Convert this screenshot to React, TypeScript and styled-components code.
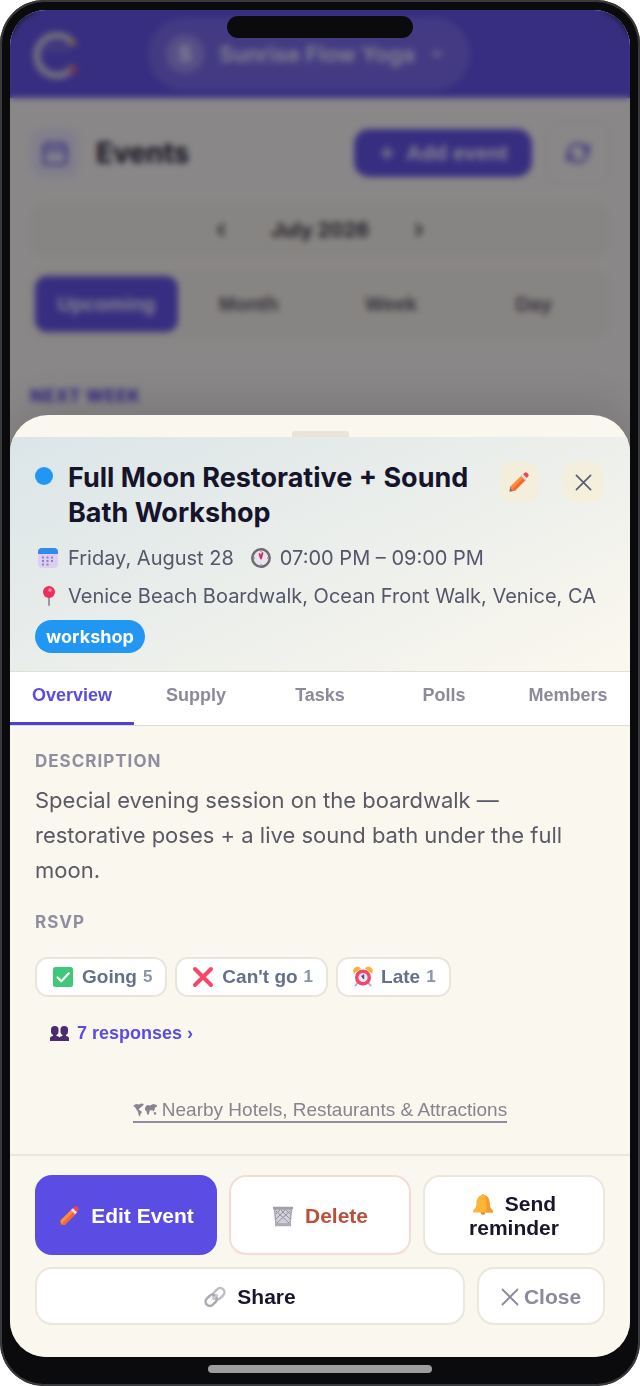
import React from "react";
import styled, { createGlobalStyle } from "styled-components";

const inter = `Inter, "Liberation Sans", sans-serif`;
const arial = `"Liberation Sans", Arial, sans-serif`;

const GlobalStyle = createGlobalStyle`
  *, *::before, *::after { box-sizing: border-box; }
  body { margin: 0; background: #fff; font-family: ${inter}; }
  button { font: inherit; color: inherit; border: 0; margin: 0; padding: 0; background: none; cursor: pointer; }
  h1, h2, h3, p { margin: 0; }
  svg { display: block; flex: none; }
`;

const Phone = styled.div`
  position: relative;
  min-height: 100vh;
  display: flex;
  flex-direction: column;
  padding: 10px 10px 0;
  border-radius: 44px;
  background: #0b0b0d;
  box-shadow: inset 0 0 0 2px #38393c;
`;

const Notch = styled.div`
  position: absolute;
  z-index: 3;
  top: 16px;
  left: 50%;
  width: 186px;
  height: 22px;
  margin-left: -93px;
  border-radius: 11px;
  background: #0b0b0d;
`;

const Screen = styled.div`
  flex: 1;
  display: grid;
  grid-template-columns: minmax(0, 1fr);
  border-radius: 36px;
  overflow: hidden;
  background: #f3f0f0;
`;

const HomeBar = styled.div`
  height: 29px;
  display: flex;
  justify-content: center;
  align-items: flex-start;
  padding-top: 8px;

  &::after {
    content: "";
    width: 224px;
    height: 8px;
    border-radius: 4px;
    background: #9d9d9f;
  }
`;

/* Page behind the sheet */

const Page = styled.div`
  grid-area: 1 / 1;
  background: #f0eded;
`;

const TopBar = styled.header`
  height: 88px;
  display: flex;
  align-items: center;
  padding: 0 21px;
  background: #5b4be0;
`;

const OrgSwitch = styled.button`
  display: flex;
  align-items: center;
  height: 72px;
  margin-left: 68px;
  padding: 0 26px 0 18px;
  gap: 15px;
  border-radius: 36px;
  background: rgba(255, 255, 255, 0.13);
  color: rgba(255, 255, 255, 0.85);
  font-weight: 600;
  font-size: 22px;
`;

const OrgInitial = styled.span`
  display: grid;
  place-items: center;
  width: 38px;
  height: 38px;
  border-radius: 50%;
  background: rgba(255, 255, 255, 0.25);
  font-size: 20px;
  font-weight: 700;
`;

const PageBody = styled.div`
  padding: 21px 20px;
`;

const TitleRow = styled.div`
  display: flex;
  align-items: center;
  height: 67px;
`;

const TitleIcon = styled.span`
  display: grid;
  place-items: center;
  width: 50px;
  height: 50px;
  margin-right: 16px;
  border-radius: 14px;
  background: #e2dff4;
  color: #7468dc;
`;

const PageTitle = styled.h1`
  flex: 1;
  font-size: 28px;
  font-weight: 700;
  color: #16142a;
`;

const AddButton = styled.button`
  display: flex;
  align-items: center;
  justify-content: center;
  gap: 10px;
  width: 178px;
  height: 48px;
  border-radius: 15px;
  background: #5b4be0;
  color: rgba(255, 255, 255, 0.9);
  font-family: ${arial};
  font-size: 21px;
  font-weight: 700;
`;

const RefreshButton = styled.button`
  display: grid;
  place-items: center;
  width: 64px;
  height: 64px;
  margin-left: 14px;
  border: 1px solid #e8e5e3;
  border-radius: 14px;
  color: #7468dc;
`;

const MonthBar = styled.div`
  display: flex;
  align-items: center;
  justify-content: center;
  gap: 40px;
  height: 56px;
  margin-top: 16px;
  border-radius: 16px;
  background: #ece9e3;
  color: #35333f;
  font-size: 20px;
  font-weight: 700;
`;

const Segments = styled.div`
  display: flex;
  height: 72px;
  margin-top: 10px;
  padding: 8px 5px;
  border-radius: 16px;
  background: #ece9e3;
`;

const Segment = styled.button<{ $on?: boolean }>`
  flex: 1;
  border-radius: 12px;
  font-family: ${arial};
  font-size: 20px;
  font-weight: 700;
  background: ${(p) => (p.$on ? "#5b4be0" : "transparent")};
  color: ${(p) => (p.$on ? "#e6e3f8" : "#5a5866")};
`;

const WeekLabel = styled.h2`
  margin-top: 46px;
  font-size: 17px;
  line-height: 20px;
  font-weight: 800;
  letter-spacing: 1px;
  color: #5b4be0;
`;

/* Sheet */

const Scrim = styled.div`
  grid-area: 1 / 1;
  z-index: 1;
  display: flex;
  flex-direction: column;
  justify-content: flex-end;
  padding-top: 40px;
  background: rgba(13, 11, 14, 0.45);
  backdrop-filter: blur(3px);
`;

const Sheet = styled.section`
  overflow: hidden;
  border-radius: 38px 38px 0 0;
  background: #faf7ee;
  box-shadow: 0 -8px 40px rgba(20, 15, 30, 0.15);
`;

const Grip = styled.div`
  height: 22px;
  padding-top: 16px;

  &::after {
    content: "";
    display: block;
    width: 57px;
    height: 6px;
    margin: 0 auto;
    border-radius: 3px 3px 0 0;
    background: #e9e4d6;
  }
`;

const SheetHeader = styled.header`
  display: flex;
  flex-direction: column;
  align-items: flex-start;
  gap: 10px;
  padding: 23px 25px 18px;
  border-bottom: 1px solid #e2dfd6;
  background: linear-gradient(155deg, #dbe5e8 0%, #faf7ee 96%);
`;

const Heading = styled.div`
  display: flex;
  align-items: flex-start;
  width: 100%;
  margin-bottom: 4px;
`;

const Dot = styled.span`
  flex: none;
  width: 18px;
  height: 18px;
  margin: 7px 15px 0 0;
  border-radius: 50%;
  background: #2196f3;
`;

const EventTitle = styled.h2`
  flex: 1;
  font-size: 27px;
  line-height: 35px;
  font-weight: 700;
  color: #15142b;
`;

const IconButton = styled.button`
  display: grid;
  place-items: center;
  flex: none;
  width: 40px;
  height: 40px;
  margin: 2px 2px 0 12px;
  border-radius: 12px;
  background: rgba(250, 238, 208, 0.55);
  color: #5c5c70;

  & + & {
    margin-left: 22px;
  }
`;

const MetaRow = styled.div`
  display: flex;
  gap: 16px;
`;

const Meta = styled.span`
  display: flex;
  align-items: center;
  gap: 8px;
  font-size: 20px;
  line-height: 28px;
  color: #55566a;
`;

const Glyph = styled.span<{ $w?: number }>`
  display: inline-flex;
  justify-content: center;
  width: ${(p) => p.$w ?? 22}px;
  flex: none;
`;

const Tag = styled.span`
  padding: 0 11px;
  border-radius: 17px;
  background: #2196f3;
  color: #fff;
  font-size: 18px;
  line-height: 33px;
  font-weight: 700;
`;

const Tabs = styled.nav`
  display: flex;
  height: 54px;
  background: #fff;
  border-bottom: 1px solid #dedbd6;
`;

const Tab = styled.button<{ $on?: boolean }>`
  flex: 1 1 0;
  padding-bottom: 3px;
  border-bottom: 3px solid ${(p) => (p.$on ? "#4f3fd6" : "transparent")};
  font-family: ${arial};
  font-size: 18px;
  font-weight: 700;
  color: ${(p) => (p.$on ? "#5b4be0" : "#8b8a9c")};
`;

const Content = styled.div`
  padding: 25px 25px 31px;
`;

const Label = styled.h3`
  font-size: 17px;
  line-height: 20px;
  font-weight: 700;
  letter-spacing: 1px;
  color: #8f8ea0;
`;

const Description = styled.p`
  margin: 12px 0 24px;
  font-size: 22px;
  line-height: 35px;
  color: #5a5a66;
`;

const Chips = styled.div`
  display: flex;
  gap: 8px;
  margin-top: 25px;
`;

const Chip = styled.button`
  display: flex;
  align-items: center;
  height: 40px;
  padding: 0 13px 0 15px;
  border: 2px solid #e9e5dc;
  border-radius: 13px;
  background: #fff;
  color: #64708a;
  font-family: ${arial};
  font-size: 19px;
  font-weight: 700;

  svg {
    margin-right: 8px;
  }
`;

const Count = styled.span`
  margin-left: 6px;
  font-size: 17px;
  color: #8a93a8;
`;

const Responses = styled.button`
  display: flex;
  align-items: center;
  gap: 8px;
  height: 24px;
  margin: 24px 0 0 15px;
  color: #5b4be0;
  font-family: ${arial};
  font-size: 18px;
  font-weight: 700;
`;

const NearbyRow = styled.div`
  display: flex;
  justify-content: center;
  margin-top: 54px;
`;

const Nearby = styled.a`
  display: flex;
  align-items: center;
  gap: 5px;
  border-bottom: 2px solid #8f8ea0;
  color: #85848f;
  font-family: ${arial};
  font-size: 19px;
  line-height: 22px;
  text-decoration: none;
`;

const Footer = styled.footer`
  display: flex;
  flex-direction: column;
  gap: 12px;
  padding: 19px 25px 32px;
  border-top: 2px solid #ebe7dd;
`;

const ActionRow = styled.div`
  display: flex;
  gap: 12px;
`;

type Tone = "primary" | "danger" | "plain" | "muted";
const tones: Record<Tone, [string, string, string]> = {
  primary: ["#5b4de3", "#fff", "#5b4de3"],
  danger: ["#fff", "#b9503a", "#f4dcd6"],
  plain: ["#fff", "#17162c", "#ebe7dd"],
  muted: ["#fff", "#8b8a9c", "#ebe7dd"],
};

const Action = styled.button<{ $tone?: Tone; $height?: number; $width?: number }>`
  flex: ${(p) => (p.$width ? `0 0 ${p.$width}px` : "1 1 0")};
  height: ${(p) => p.$height ?? 58}px;
  padding: 2px 16px 0;
  border: 2px solid ${(p) => tones[p.$tone ?? "plain"][2]};
  border-radius: 17px;
  background: ${(p) => tones[p.$tone ?? "plain"][0]};
  color: ${(p) => tones[p.$tone ?? "plain"][1]};
  font-family: ${arial};
  font-size: 21px;
  line-height: 24px;
  font-weight: 700;

  svg {
    display: inline-block;
    vertical-align: ${(p) => (p.$tone === "muted" ? -2 : -4)}px;
    margin-right: ${(p) => (p.$tone === "muted" ? 5 : 11)}px;
  }
`;

/* Icons */

const Pencil = () => (
  <svg width="22" height="22" viewBox="0 0 24 24" aria-hidden="true">
    <path d="M1.500 22.500 2.500 16.500l5 5z" fill="#8a6468" />
    <path d="M2.500 17 15 4.500l4.800 4.800L7.500 21.500q-4 1-5-4.500z" fill="#ff8b3d" />
    <path d="m5 19.500 12.500-12.500 2.300 2.300L7.500 21.500z" fill="#f3682f" />
    <path d="m14.200 5.500 2.300-2.300 4.500 4.500-2.300 2.300z" fill="#e6dfee" />
    <path d="m16.500 3.500 1.700-1.700q1.300-1 2.600.300l1.200 1.200q1.200 1.300.2 2.500l-1.700 1.700z" fill="#f8404f" />
  </svg>
);

const Cross = ({ size = 18 }: { size?: number }) => (
  <svg width={size} height={size} viewBox="0 0 18 18" fill="none" stroke="currentColor" strokeWidth="1.800" strokeLinecap="round" aria-hidden="true">
    <path d="m1.500 1.500 15 15M16.500 1.500l-15 15" />
  </svg>
);

const CalendarColor = () => (
  <svg width="22" height="22" viewBox="0 0 22 22" aria-hidden="true">
    <rect x="1" y="1" width="20" height="20" rx="4" fill="#dccff2" />
    <path d="M1 7V5q0-4 4-4h12q4 0 4 4v2z" fill="#2e8cf0" />
    <path d="M5 10.500h12M5 14h12M5 17.500h9" stroke="#8f7fc4" strokeWidth="2" strokeDasharray="2 2.500" />
  </svg>
);

const Clock = () => (
  <svg width="22" height="22" viewBox="0 0 22 22" fill="none" aria-hidden="true">
    <circle cx="11" cy="11" r="8.700" fill="#e9e2ee" stroke="#6d6a70" strokeWidth="2.500" />
    <path d="M11 11.500 12.500 6M11 11.500 9.500 7" stroke="#c5305f" strokeWidth="1.800" strokeLinecap="round" />
    <path d="M11 4v1M18 11h-1M11 18v-1M4 11h1" stroke="#77747c" />
  </svg>
);

const Pin = () => (
  <svg width="22" height="22" viewBox="0 0 22 22" aria-hidden="true">
    <path d="M12 11v9" stroke="#9a97a3" strokeWidth="2" strokeLinecap="round" />
    <circle cx="12" cy="7" r="6" fill="#ee2e5d" />
    <circle cx="13" cy="5" r="1.800" fill="#ff93ab" />
  </svg>
);

const CheckBox = () => (
  <svg width="22" height="22" viewBox="0 0 22 22" fill="none" aria-hidden="true">
    <rect x="1" y="1" width="20" height="20" rx="2.500" fill="#3fc77c" />
    <path d="m5.500 11.500 3.800 3.800 7.500-8" stroke="#fff" strokeWidth="2.200" strokeLinecap="round" strokeLinejoin="round" />
  </svg>
);

const RedCross = () => (
  <svg width="22" height="22" viewBox="0 0 22 22" fill="none" stroke="#f8476a" strokeWidth="4" strokeLinecap="round" aria-hidden="true">
    <path d="m3 3 16 16M19 3 3 19" />
  </svg>
);

const Alarm = () => (
  <svg width="20" height="22" viewBox="0 0 20 22" fill="none" aria-hidden="true">
    <path d="m4.500 17-2 2.500M15.500 17l2 2.500" stroke="#b8a8c8" strokeWidth="2" strokeLinecap="round" />
    <path d="M1 7.500a4.200 4.200 0 0 1 7-5zM19 7.500a4.200 4.200 0 0 0-7-5z" fill="#f9b32f" />
    <circle cx="10" cy="11.500" r="6.300" fill="#f0e8f5" stroke="#f2466c" strokeWidth="3.400" />
    <path d="M10.500 12.500V9M10.500 12 9 10" stroke="#5d4a78" strokeWidth="1.500" strokeLinecap="round" />
  </svg>
);

const People = () => (
  <svg width="19" height="16" viewBox="0 0 19 16" fill="#4a2b71" aria-hidden="true">
    <rect x="1" y="1" width="7.500" height="9" rx="3.500" />
    <rect x="10.500" y="1" width="7.500" height="9" rx="3.500" />
    <path d="M3 8h3.500v4H3zM12.500 8H16v4h-3.500z" />
    <path d="M0 16v-2.500Q0 11 3 11h3.500q2.500 0 3 1.500.5-1.500 3-1.500H16q3 0 3 2.500V16z" />
  </svg>
);

const WorldMap = () => (
  <svg width="24" height="14" viewBox="0 0 24 14" fill="#85848f" aria-hidden="true">
    <path d="M0 3 3 1l3 .500 2-1 3 .500-1.500 2L7 5 5.500 6.500 8 8l1 1-1.500 2-.500 3-1.500-2.500L5 8.500 3 6 2 4z" />
    <path d="M12 4.500 14 2l3 .500L20 1l4 1-.500 2-1.500.500-.500 2.500-1.500 1.500-1-2-1 1.500-1-1.500-.500 2L15.500 12 14 11l-.500-3L12 7z" />
    <path d="m20.500 9.500 2-.500 1 2-2 1z" />
  </svg>
);

const Trash = () => (
  <svg width="22" height="22" viewBox="0 0 22 22" fill="none" aria-hidden="true">
    <path d="m2.500 4 1.500 15h14l1.500-15z" fill="#d3d1da" stroke="#a7a5b0" strokeWidth="1.500" />
    <path d="m4 6 13 12M9 5l9 9M14 5l4 4M18 6 5 18M13 5l-9 9M8 5 4 9" stroke="#918f9c" />
    <path d="M1 3h20" stroke="#a19faa" strokeWidth="2.500" />
    <path d="M3 20h16" stroke="#aeacb6" strokeWidth="2.500" />
  </svg>
);

const Bell = () => (
  <svg width="22" height="22" viewBox="0 0 22 22" aria-hidden="true">
    <circle cx="11" cy="19.500" r="2.300" fill="#e8822a" />
    <path d="M9.500 2q1.500-2 3 0Q17 3.500 17.500 9l.5 5 3 4q.5 1.500-1 1.500H2q-1.500 0-1-1.500l3-4 .5-5Q5 3.500 9.500 2z" fill="#fbb539" />
    <path d="M12.500 2Q17 3.500 17.500 9l.5 5 3 4q.5 1.500-1 1.500h-6Q16 10 12.500 2z" fill="#f69a2c" />
  </svg>
);

const Chain = () => (
  <svg width="22" height="22" viewBox="0 0 22 22" fill="none" strokeWidth="2.400" aria-hidden="true">
    <rect x="8.500" y="3.500" width="12.500" height="8.500" rx="4.200" transform="rotate(-45 14.750 7.750)" stroke="#bdbbc5" />
    <rect x="1" y="10" width="12.500" height="8.500" rx="4.200" transform="rotate(-45 7.250 14.250)" stroke="#aaa8b3" />
    <path d="m8.500 13.500 5-5" stroke="#c9c7d1" />
  </svg>
);

const Logo = () => (
  <svg width="49" height="52" viewBox="0 0 49 52" fill="none" strokeLinecap="round" aria-hidden="true">
    <path d="M41 14.500a20 20 0 1 0 0 26" stroke="#c9c6dc" strokeWidth="7" />
    <path d="M16 22q9-5 20 0" stroke="#8078cf" strokeWidth="4" />
    <circle cx="42" cy="14" r="3" fill="#e8a35a" />
    <circle cx="42" cy="42" r="3.500" fill="#ef4a5a" />
  </svg>
);

const Stroke = ({ d, size = 24, width = 2.5 }: { d: string; size?: number; width?: number }) => (
  <svg width={size} height={size} viewBox="0 0 24 24" fill="none" stroke="currentColor" strokeWidth={width} strokeLinecap="round" strokeLinejoin="round" aria-hidden="true">
    <path d={d} />
  </svg>
);

const segments = ["Upcoming", "Month", "Week", "Day"];
const tabs = ["Overview", "Supply", "Tasks", "Polls", "Members"];
const replies = [
  { label: "Going", count: 5, icon: <CheckBox /> },
  { label: "Can't go", count: 1, icon: <RedCross /> },
  { label: "Late", count: 1, icon: <Alarm /> },
];

export default function App() {
  return (
    <>
      <GlobalStyle />
      <Phone>
        <Notch />
        <Screen>
          <Page>
            <TopBar>
              <Logo />
              <OrgSwitch>
                <OrgInitial>S</OrgInitial>
                Sunrise Flow Yoga
                <Stroke d="m6 9 6 6 6-6" size={14} width={4} />
              </OrgSwitch>
            </TopBar>
            <PageBody>
              <TitleRow>
                <TitleIcon>
                  <Stroke d="M5 5h14q2 0 2 2v12q0 2-2 2H5q-2 0-2-2V7q0-2 2-2zM3 10h18M8 3v2M16 3v2" size={30} />
                </TitleIcon>
                <PageTitle>Events</PageTitle>
                <AddButton>
                  <Stroke d="M12 4v16M4 12h16" size={18} width={3} />
                  Add event
                </AddButton>
                <RefreshButton aria-label="Refresh">
                  <Stroke d="M4 13a8 8 0 0 1 14-6l2 2M21 5v5h-5M20 11a8 8 0 0 1-14 6l-2-2M3 19v-5h5" size={28} />
                </RefreshButton>
              </TitleRow>
              <MonthBar>
                <Stroke d="m15 6-6 6 6 6" size={20} width={3} />
                July 2026
                <Stroke d="m9 6 6 6-6 6" size={20} width={3} />
              </MonthBar>
              <Segments>
                {segments.map((s, i) => (
                  <Segment key={s} $on={i === 0}>{s}</Segment>
                ))}
              </Segments>
              <WeekLabel>NEXT WEEK</WeekLabel>
            </PageBody>
          </Page>
          <Scrim>
            <Sheet role="dialog" aria-labelledby="event-title">
              <Grip />
              <SheetHeader>
                <Heading>
                  <Dot />
                  <EventTitle id="event-title">Full Moon Restorative + Sound Bath Workshop</EventTitle>
                  <IconButton aria-label="Edit"><Pencil /></IconButton>
                  <IconButton aria-label="Close"><Cross size={17} /></IconButton>
                </Heading>
                <MetaRow>
                  <Meta><Glyph $w={25}><CalendarColor /></Glyph>Friday, August 28</Meta>
                  <Meta><Glyph><Clock /></Glyph>07:00 PM – 09:00 PM</Meta>
                </MetaRow>
                <Meta><Glyph $w={25}><Pin /></Glyph>Venice Beach Boardwalk, Ocean Front Walk, Venice, CA</Meta>
                <Tag>workshop</Tag>
              </SheetHeader>
              <Tabs>
                {tabs.map((t, i) => (
                  <Tab key={t} $on={i === 0}>{t}</Tab>
                ))}
              </Tabs>
              <Content>
                <Label>DESCRIPTION</Label>
                <Description>
                  Special evening session on the boardwalk — restorative poses + a live sound bath under the full moon.
                </Description>
                <Label>RSVP</Label>
                <Chips>
                  {replies.map((r) => (
                    <Chip key={r.label}>{r.icon}{r.label}<Count>{r.count}</Count></Chip>
                  ))}
                </Chips>
                <Responses><People />7 responses ›</Responses>
                <NearbyRow>
                  <Nearby href="#nearby"><WorldMap />Nearby Hotels, Restaurants &amp; Attractions</Nearby>
                </NearbyRow>
              </Content>
              <Footer>
                <ActionRow>
                  <Action $tone="primary" $height={80}><Pencil />Edit Event</Action>
                  <Action $tone="danger" $height={80}><Trash />Delete</Action>
                  <Action $height={80}><Bell />Send reminder</Action>
                </ActionRow>
                <ActionRow>
                  <Action><Chain />Share</Action>
                  <Action $tone="muted" $width={128}><Cross />Close</Action>
                </ActionRow>
              </Footer>
            </Sheet>
          </Scrim>
        </Screen>
        <HomeBar />
      </Phone>
    </>
  );
}
